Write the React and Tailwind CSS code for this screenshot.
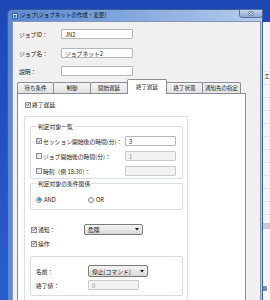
import React from 'react';

const font = "font-['Noto_Sans_CJK_JP','Noto_Sans',sans-serif]";

function Check({ checked }) {
  return (
    <span className="w-[6px] h-[6px] shrink-0 border border-[#8e8f8f] bg-gradient-to-br from-[#dcdcdc] to-[#fbfbfb] flex items-center justify-center">
      {checked && (
        <svg width="5" height="5" viewBox="0 0 5 5">
          <path d="M0.5 2.5 L2 4 L4.6 0.6" fill="none" stroke="#4c61a6" strokeWidth="1.1" />
        </svg>
      )}
    </span>
  );
}

function Radio({ on }) {
  return (
    <span className="w-[6px] h-[6px] shrink-0 rounded-full border border-[#8e8f8f] bg-gradient-to-br from-[#e0e0e0] to-[#fafafa] flex items-center justify-center">
      {on && <span className="w-[3px] h-[3px] rounded-full bg-[#2f7fd4]" />}
    </span>
  );
}

function Input({ className, value, disabled }) {
  return (
    <span
      className={`flex items-center pl-[3px] border rounded-[1px] ${
        disabled ? 'bg-[#f2f2f2] border-[#cacaca] text-[#8a8a8a]' : 'bg-white border-[#b3b7be]'
      } ${className}`}
    >
      {value}
    </span>
  );
}

function Select({ className, value }) {
  return (
    <span
      className={`flex items-center justify-between pl-[3px] pr-[3px] border border-[#7a7a7a] rounded-[2px] bg-gradient-to-b from-[#f4f4f4] via-[#e8e8e8] to-[#d6d6d6] ${className}`}
    >
      <span>{value}</span>
      <svg width="4" height="3" viewBox="0 0 4 3">
        <path d="M0 0 H4 L2 2.5 Z" fill="#111" />
      </svg>
    </span>
  );
}

const tabs = [
  { label: '待ち条件', w: 'w-[37px]' },
  { label: '制御', w: 'w-[38px]' },
  { label: '開始遅延', w: 'w-[38px]' },
  { label: '終了遅延', w: 'w-[40px]', active: true },
  { label: '終了状態', w: 'w-[37px]' },
  { label: '通知先の指定', w: 'w-[39px]' },
];

export default function App() {
  return (
    <div
      className={`relative w-[270px] h-[300px] overflow-hidden bg-gradient-to-b from-[#1c48b6] to-[#2b5dcc] ${font} text-[5.8px] leading-[7px] text-[#1b1b1b]`}
    >
      {/* another window behind, on the right */}
      <div className="absolute left-[261px] top-[22px] w-[9px] h-[278px] bg-[#f5f6f7] flex flex-col">
        <div className="h-[50px] border-b border-[#e2e4e8]" />
        <div className="h-[13px] border-b border-[#e2e4e8] pl-[3px] text-[#333]">エ</div>
        <div className="h-[13px] border-b border-[#e2e4e8]" />
        <div className="h-[13px] border-b border-[#e2e4e8]" />
        <div className="h-[13px] border-b border-[#e2e4e8]" />
        <div className="h-[13px] border-b border-[#e2e4e8]" />
        <div className="h-[13px] border-b border-[#e2e4e8]" />
        <div className="h-[13px] border-b border-[#e2e4e8]" />
        <div className="h-[13px] border-b border-[#e2e4e8]" />
        <div className="h-[13px] border-b border-[#e2e4e8]" />
        <div className="h-[13px] border-b border-[#e2e4e8]" />
        <div className="h-[13px] border-b border-[#e2e4e8]" />
        <div className="h-[6px] mt-[8px] bg-[#c8ccd2]" />
        <div className="flex-1" />
        <div className="w-[5px] h-[5px] ml-[1px] mb-[9px] bg-[#7b8fb0]" />
      </div>

      {/* dialog window */}
      <div className="absolute left-[7px] top-[9px] w-[256px] h-[300px] rounded-t-[5px] border border-[#3d5c8e] bg-gradient-to-r from-[#5a88d2] via-[#85a9de] to-[#b7cced] flex flex-col pl-[4px] pr-[1px]">
        {/* title bar */}
        <div className="h-[11px] flex items-center shrink-0">
          <svg width="6" height="6" viewBox="0 0 6 6">
            <rect x="0.5" y="0.5" width="5" height="5" fill="#eef3fb" stroke="#3c5f9c" />
            <rect x="1.5" y="2" width="3" height="2.5" fill="#3a78d0" />
          </svg>
          <span className="ml-[2px] text-[5.5px] text-[#0d0d0d]">ジョブ[ジョブネットの作成・変更]</span>
          <span className="ml-auto self-start -mt-px -mr-[2px] w-[24px] h-[9px] rounded-b-[3px] border border-[#54709f] bg-gradient-to-b from-[#c2d3ec] to-[#8ca9d6] flex items-center justify-center">
            <svg width="6" height="5" viewBox="0 0 6 5">
              <path d="M1 0.8 L5 4.2 M5 0.8 L1 4.2" stroke="#3a4a66" strokeWidth="2" />
              <path d="M1 0.8 L5 4.2 M5 0.8 L1 4.2" stroke="#ffffff" strokeWidth="1" />
            </svg>
          </span>
        </div>

        {/* body */}
        <div className="flex-1 flex flex-col bg-[#f0f0f0] border-l border-t border-r border-[#8396b5]">
          <div className="flex items-center h-[10px] mt-[7px] ml-[6px]">
            <span className="w-[42px]">ジョブID：</span>
            <Input className="w-[72px] h-[10px]" value="JN2" />
          </div>
          <div className="flex items-center h-[10px] mt-[9px] ml-[6px]">
            <span className="w-[42px]">ジョブ名：</span>
            <Input className="w-[72px] h-[10px]" value="ジョブネット2" />
          </div>
          <div className="flex items-center h-[10px] mt-[8px] ml-[6px]">
            <span className="w-[42px]">説明：</span>
            <Input className="w-[72px] h-[10px]" value="" />
          </div>

          {/* tabs */}
          <div className="flex items-end h-[14px] mt-[3px] ml-[4px]">
            {tabs.map((t, i) =>
              t.active ? (
                <div
                  key={t.label}
                  className={`${t.w} h-[15px] -ml-px relative top-px z-10 bg-white border border-b-0 border-[#898c95] rounded-t-[2px] flex items-center justify-center text-[5.5px]`}
                >
                  {t.label}
                </div>
              ) : (
                <div
                  key={t.label}
                  className={`${t.w} h-[11px] ${i > 0 ? '-ml-px' : ''} bg-gradient-to-b from-[#f3f3f3] to-[#e2e2e2] border border-b-0 border-[#898c95] rounded-t-[2px] flex items-center justify-center text-[5.5px]`}
                >
                  {t.label}
                </div>
              )
            )}
          </div>

          {/* tab panel */}
          <div className="flex-1 w-[229px] ml-[4px] bg-white border border-[#898c95] flex flex-col">
            <div className="flex items-center gap-[1px] h-[7px] mt-[7px] ml-[7px]">
              <Check checked />
              <span>終了遅延</span>
            </div>

            <div className="flex-1 w-[164px] ml-[6px] mt-[8px] border border-[#d5dfe5] rounded-[2px] flex flex-col">
              {/* 判定対象一覧 */}
              <fieldset className="w-[153px] ml-[5px] mt-[6px] border border-[#d5dfe5] rounded-[2px] pl-[5px] pr-[6px] pt-[6px] pb-[2px] flex flex-col gap-[5px]">
                <legend className="ml-[1px] px-[1px] leading-[7px]">判定対象一覧</legend>
                <div className="flex items-center h-[10px] gap-[1px]">
                  <Check checked />
                  <span className="flex-1">セッション開始後の時間(分)：</span>
                  <Input className="w-[51px] h-[10px]" value="3" />
                </div>
                <div className="flex items-center h-[10px] gap-[1px]">
                  <Check />
                  <span className="flex-1">ジョブ開始後の時間(分)：</span>
                  <Input className="w-[51px] h-[10px]" value="1" disabled />
                </div>
                <div className="flex items-center h-[10px] gap-[1px]">
                  <Check />
                  <span className="flex-1">時刻（例 18:30）：</span>
                  <Input className="w-[51px] h-[10px]" value="" disabled />
                </div>
              </fieldset>

              {/* 判定対象の条件関係 */}
              <fieldset className="w-[153px] ml-[5px] mt-[1px] border border-[#d5dfe5] rounded-[2px] pl-[5px] pt-[9px] pb-[6px]">
                <legend className="ml-[1px] px-[1px] leading-[7px]">判定対象の条件関係</legend>
                <div className="flex items-center h-[7px]">
                  <span className="w-[52px] flex items-center gap-[2px]">
                    <Radio on />
                    <span>AND</span>
                  </span>
                  <span className="flex items-center gap-[2px]">
                    <Radio />
                    <span>OR</span>
                  </span>
                </div>
              </fieldset>

              <div className="flex items-center h-[11px] mt-[14px] ml-[6px] gap-[1px]">
                <Check checked />
                <span className="w-[45px]">通知：</span>
                <Select className="w-[59px] h-[11px]" value="危険" />
              </div>
              <div className="flex items-center h-[7px] mt-[5px] ml-[6px] gap-[1px]">
                <Check checked />
                <span>操作</span>
              </div>

              <div className="w-[153px] ml-[5px] mt-[9px] border border-[#d5dfe5] rounded-[2px] pl-[5px] pt-[8px] pb-[5px] flex flex-col">
                <div className="flex items-center h-[12px]">
                  <span className="w-[52px]">名前：</span>
                  <Select className="w-[60px] h-[12px]" value="停止[コマンド]" />
                </div>
                <div className="flex items-center h-[10px] mt-[3px]">
                  <span className="w-[52px]">終了値：</span>
                  <Input className="w-[51px] h-[10px]" value="0" disabled />
                </div>
              </div>
            </div>
          </div>
        </div>
      </div>
    </div>
  );
}
